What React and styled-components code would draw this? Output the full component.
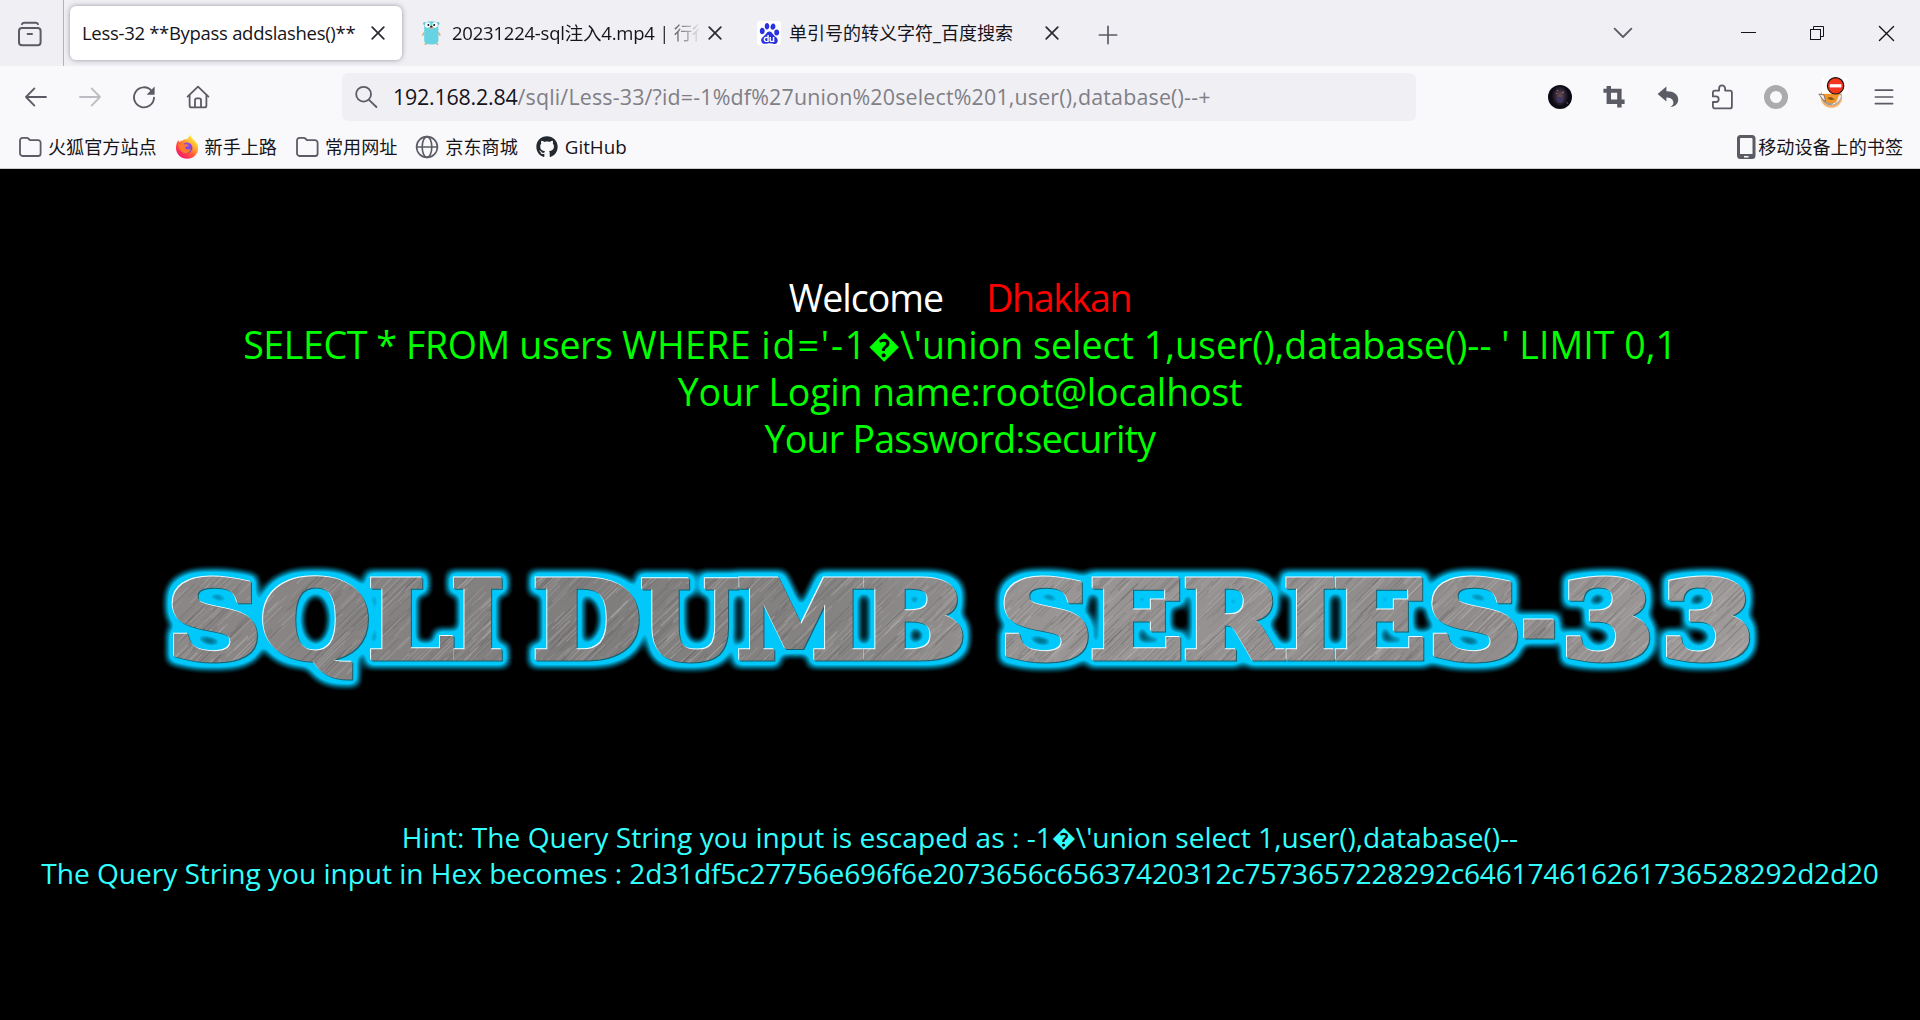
import React, { useMemo } from "react";
import styled, { createGlobalStyle } from "styled-components";
import { FaGithub } from "react-icons/fa";
import { SiBaidu } from "react-icons/si";

const GlobalStyle = createGlobalStyle`
  * { box-sizing: border-box; }
  body { margin: 0; background: #000; font-family: "Open Sans", "Noto Sans CJK SC", sans-serif; }
`;

const Window = styled.div`
  width: 1920px;
  height: 1020px;
  display: flex;
  flex-direction: column;
  background: #000;
  overflow: hidden;
  color: #15141a;
`;

/* ---------- tab strip ---------- */

const TabStrip = styled.header`
  height: 66px;
  flex: none;
  display: flex;
  align-items: center;
  background: #f0eff4;
`;

const FirefoxView = styled.div`
  width: 64px;
  height: 66px;
  padding: 1px 0 0 17px;
  margin-right: 6px;
  display: flex;
  align-items: center;
  border-right: 1px solid #b4b3b9;
`;

const Tabs = styled.div`
  display: flex;
  gap: 5px;
`;

const Tab = styled.div`
  width: 332px;
  height: 54px;
  padding: 0 17px 0 ${(p) => (p.$active ? 12 : 13)}px;
  display: flex;
  align-items: center;
  border-radius: 6px;
  background: ${(p) => (p.$active ? "#fff" : "transparent")};
  box-shadow: ${(p) => (p.$active ? "0 0 5px rgba(90, 90, 100, 0.6)" : "none")};
`;

const TabTitle = styled.span`
  flex: 1;
  min-width: 0;
  margin-left: ${(p) => p.$indent || 0}px;
  overflow: hidden;
  white-space: nowrap;
  font-size: ${(p) => p.$size || 18.5}px;
  line-height: 28px;
  letter-spacing: ${(p) => p.$ls || 0}px;
  ${(p) => p.$fade && "mask-image: linear-gradient(to right, #000 208px, transparent 250px);"}
`;

const TabClose = styled.span`
  width: 14px;
  margin-left: ${(p) => p.$gap || 0}px;
  display: flex;
`;

const NewTab = styled.div`
  margin-left: 22px;
  margin-top: 3px;
  display: flex;
`;

const WindowControls = styled.div`
  margin-left: auto;
  padding-right: 25px;
  display: flex;
  align-items: center;
`;

const Control = styled.span`
  display: flex;
  margin-left: ${(p) => p.$gap || 0}px;
`;

/* ---------- navigation toolbar ---------- */

const NavBar = styled.div`
  height: 62px;
  flex: none;
  display: flex;
  align-items: center;
  background: #f9f9fb;
  padding: 0 22px 0 24px;
`;

const NavButtons = styled.div`
  width: 318px;
  display: flex;
  gap: 30px;
`;

const UrlField = styled.div`
  width: 1074px;
  height: 48px;
  margin-top: -1px;
  padding-left: 12px;
  display: flex;
  align-items: center;
  border-radius: 6px;
  background: #f0eff4;
  font-size: 21.4px;
  white-space: pre;
  color: #807f86;
`;

const UrlHost = styled.span`
  margin: 0 0 1px 15px;
  color: #15141a;
  letter-spacing: -0.2px;
`;

const UrlPath = styled.span`
  margin-bottom: 1px;
  letter-spacing: 0.18px;
`;

const Extensions = styled.div`
  margin-left: auto;
  display: flex;
  align-items: center;
  gap: 26px;
`;

const ToolIcon = styled.span`
  width: 28px;
  height: 48px;
  display: flex;
  align-items: center;
  justify-content: center;

  svg {
    flex: none;
  }
`;

const BadgedToolIcon = styled(ToolIcon)`
  padding: 0 0 9px 5px;
`;

/* ---------- bookmarks ---------- */

const Bookmarks = styled.div`
  height: 41px;
  flex: none;
  display: flex;
  align-items: flex-start;
  padding: 6px 17px 0 18px;
  gap: 18px;
  background: #f9f9fb;
  border-bottom: 1px solid #cccccf;
`;

const Bookmark = styled.div`
  height: 26px;
  display: flex;
  align-items: center;
  gap: ${(p) => p.$gap ?? 6}px;
  font-size: 18.1px;
  line-height: 26px;
  white-space: nowrap;
  ${(p) => p.$end && "margin-left: auto;"}
`;

const Latin = styled.span`
  font-size: 18.8px;
`;

/* ---------- web page ---------- */

const Page = styled.main`
  flex: 1;
  display: flex;
  flex-direction: column;
  align-items: center;
  padding-top: 105px;
`;

const Results = styled.div`
  display: flex;
  flex-direction: column;
  align-items: center;
  height: 266px;
  font-size: 37.5px;
  line-height: 47px;
  color: #00ff00;
`;

const Line = styled.div`
  display: flex;
  white-space: pre;
  letter-spacing: ${(p) => p.$ls || 0}px;
`;

const Welcome = styled(Line)`
  gap: 43px;
  color: #fff;
`;

const Name = styled.span`
  color: #ff0000;
  letter-spacing: -1.3px;
`;

const Seg = styled.span`
  letter-spacing: ${(p) => p.$ls || 0}px;
`;

const Diamond = styled.span`
  font-size: 0.85em;
`;

const Hints = styled.div`
  margin-top: 119px;
  display: flex;
  flex-direction: column;
  align-items: center;
  font-size: 28.1px;
  line-height: 36px;
  color: #33ffff;
`;

const BannerSvg = styled.svg`
  width: 1640px;
  height: 160px;
  flex: none;
  display: block;
  font-family: "DejaVu Serif", serif;
  font-weight: 700;
  font-size: 107px;
`;

/* ---------- banner ---------- */

const WORDS = [
  [["S", 173, 256.5], ["Q", 263, 368], ["L", 371.5, 453.5], ["I", 454, 502.5]],
  [["D", 536, 639], ["U", 641.5, 738.5], ["M", 739, 864], ["B", 864, 962.5]],
  [
    ["S", 1005, 1087.5], ["E", 1093, 1181], ["R", 1186, 1285.5], ["I", 1286.5, 1335],
    ["E", 1336, 1424], ["S", 1433, 1517], ["-", 1523, 1555], ["3", 1567, 1649], ["3", 1667, 1749],
  ],
];

const EDGE = 2.5;

function placeGlyphs() {
  const ctx = document.createElement("canvas").getContext("2d");
  ctx.font = 'bold 107px "DejaVu Serif", serif';
  return WORDS.map((word) =>
    word.map(([ch, left, right]) => {
      const m = ctx.measureText(ch);
      const ink = m.actualBoundingBoxLeft + m.actualBoundingBoxRight;
      const k = (right - left - 2 * EDGE) / ink;
      return { ch, x: left + EDGE + m.actualBoundingBoxLeft * k, length: m.width * k };
    })
  );
}

function brushStrokes() {
  let seed = 7;
  const rnd = () => {
    seed = (seed * 16807) % 2147483647;
    return seed / 2147483647;
  };
  return Array.from({ length: 2600 }, () => {
    const x = 140 + rnd() * 1640;
    const y = 560 + rnd() * 140;
    const len = 12 + rnd() * 44;
    return {
      d: `M${x.toFixed(1)} ${y.toFixed(1)}l${(len * 0.72).toFixed(1)} ${(-len * 0.7).toFixed(1)}`,
      c: rnd() > 0.5 ? "#c6c2c0" : "#565454",
      o: (0.1 + rnd() * 0.22).toFixed(2),
    };
  });
}

function Banner() {
  const words = useMemo(placeGlyphs, []);
  const strokes = useMemo(brushStrokes, []);
  return (
    <BannerSvg viewBox="140 540 1640 160">
      <defs>
        <linearGradient id="steel" gradientUnits="userSpaceOnUse" x1="140" y1="0" x2="1780" y2="0">
          <stop offset="0" stopColor="#8c8888" />
          <stop offset="0.28" stopColor="#807d7d" />
          <stop offset="0.42" stopColor="#858282" />
          <stop offset="0.56" stopColor="#9a9696" />
          <stop offset="0.8" stopColor="#8f8b8b" />
          <stop offset="1" stopColor="#a19d9c" />
        </linearGradient>
        <pattern id="brushed" patternUnits="userSpaceOnUse" x="140" y="540" width="1640" height="160" viewBox="140 540 1640 160">
          <rect x="140" y="540" width="1640" height="160" fill="url(#steel)" />
          {strokes.map((s, i) => (
            <path key={i} d={s.d} stroke={s.c} strokeOpacity={s.o} strokeWidth="1.2" />
          ))}
        </pattern>
        <filter id="glow" filterUnits="userSpaceOnUse" x="140" y="540" width="1640" height="160" colorInterpolationFilters="sRGB">
          <feMorphology in="SourceAlpha" operator="dilate" radius="5" result="fat" />
          <feGaussianBlur in="fat" stdDeviation="4" result="soft" />
          <feComponentTransfer in="soft" result="halo">
            <feFuncA type="linear" slope="1.9" intercept="-0.1" />
          </feComponentTransfer>
          <feFlood floodColor="#00c8fb" />
          <feComposite in2="halo" operator="in" result="cyan" />
          <feOffset in="SourceAlpha" dx="-1.2" dy="-1.2" result="up" />
          <feFlood floodColor="#f2fdff" />
          <feComposite in2="up" operator="in" result="light" />
          <feOffset in="SourceAlpha" dx="1" dy="1" result="down" />
          <feFlood floodColor="#17606f" />
          <feComposite in2="down" operator="in" result="shade" />
          <feMerge>
            <feMergeNode in="cyan" />
            <feMergeNode in="shade" />
            <feMergeNode in="light" />
            <feMergeNode in="SourceGraphic" />
          </feMerge>
        </filter>
      </defs>
      <g filter="url(#glow)" fill="url(#brushed)" stroke="url(#brushed)" strokeWidth={2 * EDGE}>
        {words.map((word, i) => (
          <text key={i} y="657.5">
            {word.map((g, j) => (
              <tspan key={j} x={g.x} textLength={g.length} lengthAdjust="spacingAndGlyphs">
                {g.ch}
              </tspan>
            ))}
          </text>
        ))}
      </g>
    </BannerSvg>
  );
}

/* ---------- icons ---------- */

const line = { fill: "none", stroke: "#5b5b66", strokeWidth: 2, strokeLinecap: "round", strokeLinejoin: "round" };

const ViewIcon = () => (
  <svg width="26" height="26" viewBox="0 0 26 26" {...line}>
    <path d="M5 3.2Q5.6 1.8 7.2 1.8H18.8Q20.4 1.8 21 3.2" />
    <rect x="2" y="7" width="21.6" height="17.2" rx="3" />
    <path d="M10.6 13H15" />
  </svg>
);

const Cross = ({ size = 14, color = "#2b2a33", width = 1.7 }) => (
  <svg width={size} height={size} viewBox="0 0 14 14" fill="none" stroke={color} strokeWidth={width} strokeLinecap="round">
    <path d="M1.2 1.2L12.8 12.8M12.8 1.2L1.2 12.8" />
  </svg>
);

const Gopher = () => (
  <svg width="24" height="24" viewBox="0 0 24 24">
    <path d="M4 12L2.8 14M18.6 12L19.8 14M7 22L5.2 23.4M16 22L17.6 23.4" stroke="#d9b48f" strokeWidth="1.8" strokeLinecap="round" />
    <circle cx="4.8" cy="2.6" r="1.7" fill="#58c3d2" />
    <circle cx="17.8" cy="2.6" r="1.7" fill="#58c3d2" />
    <path d="M4.2 5Q4.2 .3 11.3 .3T18.4 5V19.6Q18.4 23.6 11.3 23.6T4.2 19.6Z" fill="#67d3e2" />
    <circle cx="7.6" cy="4" r="2.7" fill="#fff" />
    <circle cx="15" cy="4" r="2.7" fill="#fff" />
    <circle cx="8.4" cy="4.1" r="1" fill="#111" />
    <circle cx="14.2" cy="4.1" r="1" fill="#111" />
    <ellipse cx="11.3" cy="6.7" rx="2" ry="1.2" fill="#d9b48f" />
    <ellipse cx="11.3" cy="5.7" rx="1.2" ry=".9" fill="#222" />
  </svg>
);

const BaiduTile = styled.span`
  width: 24px;
  height: 24px;
  display: flex;
  align-items: center;
  justify-content: center;
  border-radius: 3px;
  background: #fff;
  color: #2932e1;
`;

const Folder = () => (
  <svg width="24" height="22" viewBox="0 0 24 22" {...line} strokeWidth="1.8">
    <path d="M2 4.4A2.6 2.6 0 0 1 4.6 1.8H8.6Q9.6 1.8 10.3 2.5L12 4.2H20A2.6 2.6 0 0 1 22.6 6.8V17.4A2.6 2.6 0 0 1 20 20H4.6A2.6 2.6 0 0 1 2 17.4Z" />
  </svg>
);

const Firefox = () => (
  <svg width="24" height="24" viewBox="0 0 24 24">
    <defs>
      <linearGradient id="fxBody" x1=".85" y1=".1" x2=".2" y2=".95">
        <stop offset="0" stopColor="#fff44f" />
        <stop offset=".3" stopColor="#ffb22e" />
        <stop offset=".6" stopColor="#ff5a3c" />
        <stop offset="1" stopColor="#f5156c" />
      </linearGradient>
      <radialGradient id="fxGlobe" cx=".6" cy=".3" r=".8">
        <stop offset="0" stopColor="#a14be8" />
        <stop offset="1" stopColor="#4a3ed0" />
      </radialGradient>
    </defs>
    <path d="M1 13C1 9 2.2 6.6 3.6 5L4 7.4C5 6.3 6 5.8 7.4 5.8C8.6 4.6 10 4.2 11.4 4.4C12.4 4.4 13.6 1.6 15.6 0C15.8 3 19.6 4.8 21 7.4C22 7.6 23.2 10 23.2 13C23.2 19 18.4 23.8 12.2 23.8S1 19 1 13Z" fill="url(#fxBody)" />
    <circle cx="12.2" cy="12.6" r="5.2" fill="url(#fxGlobe)" />
    <path d="M3.4 9.2C6 7.6 8 8 9.6 9.4C11 9 13.4 9.2 13.2 10.4C13 11.4 10.4 11.4 10.2 12.6C10.4 14.8 14 15.2 16 13.6C15.4 17 12.8 18.6 10 18C6 17.4 3.4 13.4 3.4 9.2Z" fill="#ff7a2e" />
  </svg>
);

const Globe = () => (
  <svg width="24" height="24" viewBox="0 0 24 24" {...line} strokeWidth="1.6">
    <circle cx="12" cy="12" r="10.4" />
    <ellipse cx="12" cy="12" rx="4.8" ry="10.4" />
    <path d="M1.6 12H22.4" />
  </svg>
);

const Mobile = () => (
  <svg width="19" height="24" viewBox="0 0 19 24">
    <path fillRule="evenodd" d="M3.5 0H15A3.5 3.5 0 0 1 18.5 3.5V20.5A3.5 3.5 0 0 1 15 24H3.5A3.5 3.5 0 0 1 0 20.5V3.5A3.5 3.5 0 0 1 3.5 0ZM3 4V19H15.5V4Q15.5 3 14.5 3H4Q3 3 3 4ZM7 21V22.4H11.5V21Z" fill="#5b5b66" />
  </svg>
);

const BackArrow = ({ flip, color = "#5b5b66" }) => (
  <svg width="24" height="24" viewBox="0 0 24 24" {...line} stroke={color} strokeWidth="1.8">
    <path d={flip ? "M2 12H22M13.6 3.4L22 12L13.6 20.6" : "M22 12H2M10.4 3.4L2 12L10.4 20.6"} />
  </svg>
);

const Reload = () => (
  <svg width="24" height="24" viewBox="0 0 24 24">
    <path d="M19.6 5.8A10 10 0 1 0 22 12.8" {...line} strokeWidth="1.9" />
    <path d="M22.6 1.6V9.2Q22.6 9.8 22 9.8H14.6Z" fill="#5b5b66" />
  </svg>
);

const Home = () => (
  <svg width="24" height="24" viewBox="0 0 24 24" {...line} strokeWidth="1.8">
    <path d="M1.6 11.6L12 1.6L22.4 11.6" />
    <path d="M3.6 10V20.4A2 2 0 0 0 5.6 22.4H18.4A2 2 0 0 0 20.4 20.4V10" />
    <path d="M9 22V15A1.6 1.6 0 0 1 10.6 13.4H13.4A1.6 1.6 0 0 1 15 15V22" />
  </svg>
);

const Search = () => (
  <svg width="24" height="24" viewBox="0 0 24 24" {...line} strokeWidth="1.8">
    <circle cx="9.6" cy="9.2" r="7.4" />
    <path d="M15 14.8L22.4 22" />
  </svg>
);

const Avatar = () => (
  <svg width="24" height="24" viewBox="0 0 24 24">
    <defs>
      <radialGradient id="face" cx=".5" cy=".45" r=".5">
        <stop offset="0" stopColor="#6a5254" />
        <stop offset=".55" stopColor="#35293c" />
        <stop offset="1" stopColor="#0c0a14" />
      </radialGradient>
    </defs>
    <circle cx="12" cy="12" r="12" fill="#0c0a14" />
    <ellipse cx="12" cy="12" rx="8.4" ry="11" fill="url(#face)" />
    <path d="M8 7.6L9.4 9M13.6 8L16 6.8M9 5L10 6.4" stroke="#a87a60" strokeWidth="1" />
    <path d="M8.4 13Q12 11 15.6 13L14.6 17Q12 19 9.6 17Z" fill="#3f3860" />
    <path d="M18.6 17L20 19" stroke="#684048" strokeWidth="1.2" />
  </svg>
);

const Crop = () => (
  <svg width="22" height="22" viewBox="0 0 22 22">
    <path fillRule="evenodd" d="M3.6 0H8V2.8H18.6V13.6H21.6V18H18.6V21.4H14.2V18H3.6V6.8H.4V2.8H3.6ZM8 6.8V13.6H14.2V6.8Z" fill="#5b5b66" />
  </svg>
);

const Undo = () => (
  <svg width="22" height="22" viewBox="0 0 22 22">
    <path d="M9.4.6V5.2C16.4 5 21.2 8.2 21.2 13.4C21.2 17.4 18.6 20.2 13.4 21C16 19.6 16.8 17.8 16.2 15.6C15.6 13 13.4 11.6 9.4 11.6V15.6L.6 8Z" fill="#5b5b66" />
  </svg>
);

const Puzzle = () => (
  <svg width="24" height="26" viewBox="0 0 24 26" {...line} strokeWidth="1.8">
    <path d="M2.9 8.6A2 2 0 0 1 4.9 6.6H9.1V4.4A3 3 0 0 1 15.1 4.4V6.6H19.9A2 2 0 0 1 21.9 8.6V22.4A2 2 0 0 1 19.9 24.4H4.9A2 2 0 0 1 2.9 22.4V18H5.9A2.8 2.8 0 0 0 5.9 12.4H2.9Z" />
  </svg>
);

const Ring = () => (
  <svg width="24" height="24" viewBox="0 0 24 24">
    <circle cx="12" cy="12" r="9" fill="none" stroke="#ababab" strokeWidth="6" />
  </svg>
);

const BlockedFox = () => (
  <svg width="30" height="32" viewBox="0 0 30 32">
    <rect x="4" y="1" width="26" height="17" rx="3" fill="#fff" />
    <circle cx="13.4" cy="20" r="10.8" fill="#f7b26a" />
    <circle cx="13.4" cy="18.2" r="10.2" fill="#9c9c9e" />
    <path d="M4 1H27Q30 1 30 4V17H4Z" fill="#fff" />
    <path d="M13.4 28Q22 26 23.4 18.4L19 17L17 25Z" fill="#e9e9ea" />
    <path d="M.8 17L24 16.4L21 18L18 25.6Q12 27.4 6.6 24.6L4 19.6Z" fill="#f3952b" />
    <path d="M.8 17L6 18L7.6 24.6L4.4 22Z" fill="#f4efe9" stroke="#5b5b5b" strokeWidth=".7" />
    <path d="M9 21L13 20L17 22.4L12.6 23Z" fill="#7d541d" />
    <circle cx="17.6" cy="8.8" r="8.2" fill="#f4361d" stroke="#1a1010" strokeWidth="1.2" />
    <rect x="11.8" y="7.2" width="11.6" height="3.2" fill="#fff" />
  </svg>
);

const Menu = () => (
  <svg width="20" height="16" viewBox="0 0 20 16" {...line} strokeWidth="1.7">
    <path d="M1.4 1.2H18.6M1.4 8H18.6M1.4 14.6H18.6" />
  </svg>
);

export default function App() {
  return (
    <Window>
      <GlobalStyle />
      <TabStrip>
        <FirefoxView>
          <ViewIcon />
        </FirefoxView>
        <Tabs>
          <Tab $active>
            <TabTitle $ls={-0.3}>Less-32 **Bypass addslashes()**</TabTitle>
            <TabClose><Cross /></TabClose>
          </Tab>
          <Tab>
            <Gopher />
            <TabTitle $indent={8} $ls={-0.22} $fade>20231224-sql注入4.mp4 | 行行</TabTitle>
            <TabClose $gap={8}><Cross /></TabClose>
          </Tab>
          <Tab>
            <BaiduTile><SiBaidu size={21} /></BaiduTile>
            <TabTitle $indent={8} $size={18}>单引号的转义字符_百度搜索</TabTitle>
            <TabClose><Cross /></TabClose>
          </Tab>
        </Tabs>
        <NewTab>
          <svg width="20" height="20" viewBox="0 0 20 20" {...line} strokeWidth="1.7">
            <path d="M10 1.4V18.6M1.4 10H18.6" />
          </svg>
        </NewTab>
        <WindowControls>
          <Control>
            <svg width="20" height="12" viewBox="0 0 20 12" {...line} strokeWidth="1.8">
              <path d="M1.6 1.6L10 10L18.4 1.6" />
            </svg>
          </Control>
          <Control $gap={108}>
            <svg width="16" height="2" viewBox="0 0 16 2"><rect width="15" height="1" fill="#15141a" /></svg>
          </Control>
          <Control $gap={53}>
            <svg width="15" height="15" viewBox="0 0 15 15" fill="none" stroke="#15141a">
              <rect x=".5" y="3.5" width="10" height="10" />
              <path d="M3.5 3.5V.5H13.5V10.5H10.5" />
            </svg>
          </Control>
          <Control $gap={53}><Cross size={17} color="#15141a" width={1.1} /></Control>
        </WindowControls>
      </TabStrip>

      <NavBar>
        <NavButtons>
          <BackArrow />
          <BackArrow flip color="#bcbcc2" />
          <Reload />
          <Home />
        </NavButtons>
        <UrlField>
          <Search />
          <UrlHost>192.168.2.84</UrlHost>
          <UrlPath>/sqli/Less-33/?id=-1%df%27union%20select%201,user(),database()--+</UrlPath>
        </UrlField>
        <Extensions>
          <ToolIcon><Avatar /></ToolIcon>
          <ToolIcon><Crop /></ToolIcon>
          <ToolIcon><Undo /></ToolIcon>
          <ToolIcon><Puzzle /></ToolIcon>
          <ToolIcon><Ring /></ToolIcon>
          <BadgedToolIcon><BlockedFox /></BadgedToolIcon>
          <ToolIcon><Menu /></ToolIcon>
        </Extensions>
      </NavBar>

      <Bookmarks>
        <Bookmark><Folder />火狐官方站点</Bookmark>
        <Bookmark><Firefox />新手上路</Bookmark>
        <Bookmark><Folder />常用网址</Bookmark>
        <Bookmark><Globe />京东商城</Bookmark>
        <Bookmark $gap={7}><FaGithub size={22} color="#24292f" /><Latin>GitHub</Latin></Bookmark>
        <Bookmark $end $gap={2}><Mobile />移动设备上的书签</Bookmark>
      </Bookmarks>

      <Page>
        <Results>
          <Welcome $ls={-1}>
            <span>Welcome</span>
            <Name>Dhakkan</Name>
          </Welcome>
          <Line>
            <Seg $ls={-0.37}>{"SELECT * FROM users "}</Seg>
            <Seg $ls={0.4}>{"WHERE "}</Seg>
            <Seg $ls={1.9}>id='-1</Seg>
            <Diamond>{"\uFFFD"}</Diamond>
            <Seg $ls={0.03}>{"\\'union select 1,user(),database()-- ' LIMIT 0,1"}</Seg>
          </Line>
          <Line $ls={-0.2}>Your Login name:root@localhost</Line>
          <Line $ls={-0.75}>Your Password:security</Line>
        </Results>
        <Banner />
        <Hints>
          <Line>
            <Seg $ls={0.04}>Hint: The Query String you input is escaped as : -1</Seg>
            <Diamond>{"\uFFFD"}</Diamond>
            <Seg>{"\\'union select 1,user(),database()--"}</Seg>
          </Line>
          <Line>
            <Seg $ls={-0.03}>{"The Query String you input in Hex becomes : "}</Seg>
            <Seg $ls={-0.2}>2d31df5c27756e696f6e2073656c65637420312c7573657228292c646174616261736528292d2d20</Seg>
          </Line>
        </Hints>
      </Page>
    </Window>
  );
}
